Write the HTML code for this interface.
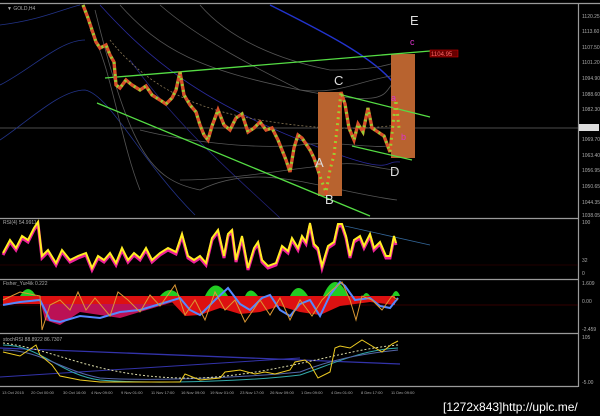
<!DOCTYPE html>
<html><head><style>
html,body{margin:0;padding:0;background:#000;width:600px;height:416px;overflow:hidden}
svg{display:block}
text{font-family:"Liberation Sans",sans-serif}
</style></head><body>
<svg width="600" height="416" viewBox="0 0 600 416">
<rect width="600" height="416" fill="#000"/>
<g stroke="#9a9a9a" stroke-width="1.2" fill="none">
<line x1="0" y1="3.5" x2="600" y2="3.5"/>
<line x1="0" y1="218.5" x2="578" y2="218.5"/>
<line x1="0" y1="279.5" x2="578" y2="279.5"/>
<line x1="0" y1="333.5" x2="578" y2="333.5"/>
<line x1="0" y1="386.5" x2="578" y2="386.5"/>
<line x1="578.5" y1="3" x2="578.5" y2="387"/>
</g>
<line x1="0" y1="128" x2="578" y2="128" stroke="#666" stroke-width="0.8"/>
<g fill="none" stroke-width="0.8">
<path d="M0,25 C40,20 60,10 80,5" stroke="#223388"/>
<path d="M0,85 C30,70 60,40 85,40" stroke="#223388"/>
<path d="M0,140 C30,120 60,90 85,90 C110,95 140,160 195,215" stroke="#223388"/>
<path d="M100,5 C150,60 200,100 300,140 S380,160 400,162" stroke="#2a2a9a"/>
<path d="M130,60 C180,130 240,180 280,218" stroke="#222277"/>
<path d="M270,5 C320,30 380,60 397,88" stroke="#2233cc" stroke-width="1.5"/>
<path d="M90,30 C110,60 120,140 140,190" stroke="#555"/>
<path d="M95,10 C130,150 150,180 200,190 C260,160 320,190 397,200" stroke="#555"/>
<path d="M120,5 C160,50 200,70 300,90 S380,90 397,80" stroke="#555"/>
<path d="M160,5 C200,40 260,70 300,90 C340,95 360,80 397,75" stroke="#555"/>
<path d="M200,5 C230,40 280,60 330,70 C360,70 380,68 397,62" stroke="#555"/>
<path d="M140,130 C180,140 250,150 300,145 C340,140 370,150 397,145" stroke="#555"/>
<path d="M180,180 C230,180 280,170 330,165 C360,160 380,170 397,170" stroke="#555"/>
<path d="M110,40 C150,90 200,110 260,120 S360,130 397,125" stroke="#887755" stroke-dasharray="2,2"/>
</g>
<rect x="318" y="92" width="24" height="104" fill="#b8632f"/>
<rect x="391" y="54" width="24" height="104" fill="#b8632f"/>
<g stroke="#55dd44" stroke-width="1.3">
<line x1="105" y1="78" x2="430" y2="51"/>
<line x1="97" y1="103" x2="370" y2="216"/>
<line x1="342" y1="95" x2="430" y2="117"/>
<line x1="352" y1="146" x2="412" y2="160"/>
</g>
<g id="px">
<polyline fill="none" stroke="#d8502a" stroke-width="3.4" points="83,5 88,18 92,30 96,42 100,48 106,45 110,55 114,62 116,85 120,88 126,80 132,85 140,90 146,86 152,95 160,100 166,104 172,98 176,90 180,72 184,95 190,105 196,112 200,125 204,135 208,140 212,126 218,110 224,125 230,130 236,118 242,114 248,132 254,128 260,122 266,130 272,128 278,140 282,150 286,160 290,172 294,148 298,135 302,138 306,144 310,150 314,158 318,170 322,182 326,192 330,170 334,155 338,120 341,92 345,104 349,128 354,140 358,124 363,132 368,108 372,128 378,132 384,136 390,152 393,124 396,100 399,128"/>
<polyline fill="none" stroke="#99cc33" stroke-width="3" stroke-dasharray="2,4" points="83,5 88,18 92,30 96,42 100,48 106,45 110,55 114,62 116,85 120,88 126,80 132,85 140,90 146,86 152,95 160,100 166,104 172,98 176,90 180,72 184,95 190,105 196,112 200,125 204,135 208,140 212,126 218,110 224,125 230,130 236,118 242,114 248,132 254,128 260,122 266,130 272,128 278,140 282,150 286,160 290,172 294,148 298,135 302,138 306,144 310,150 314,158 318,170 322,182 326,192 330,170 334,155 338,120 341,92 345,104 349,128 354,140 358,124 363,132 368,108 372,128 378,132 384,136 390,152 393,124 396,100 399,128"/>
</g>
<g font-size="13" fill="#ddd">
<text x="410" y="25">E</text>
<text x="334" y="85">C</text>
<text x="315" y="167">A</text>
<text x="325" y="204">B</text>
<text x="390" y="176">D</text>
</g>
<g font-size="9" fill="#dd33cc">
<text x="410" y="45">c</text><text x="391" y="101">a</text><text x="401" y="140">b</text>
</g>
<rect x="430" y="50" width="28" height="7" fill="#600" stroke="#c00" stroke-width="0.6"/>
<text x="431" y="56" font-size="6" fill="#f66">1104.95</text>
<rect x="579" y="124" width="20" height="7" fill="#ddd"/>
<g font-size="5" fill="#aaa">
<text x="7" y="10">▼ GOLD,H4</text>
<text x="582" y="18">1120.25</text><text x="582" y="33">1113.60</text><text x="582" y="49">1107.50</text>
<text x="582" y="64">1101.20</text><text x="582" y="80">1094.90</text><text x="582" y="96">1088.60</text>
<text x="582" y="111">1082.30</text><text x="582" y="141">1069.70</text><text x="582" y="157">1063.40</text>
<text x="582" y="172">1056.95</text><text x="582" y="188">1050.65</text><text x="582" y="204">1044.35</text>
<text x="582" y="217">1038.05</text>
<text x="3" y="224">RSI(4) 54.9911</text><text x="582" y="224">100</text><text x="582" y="262">32</text><text x="582" y="275">0</text>
<text x="3" y="285">Fisher_Yur4ik 0.222</text><text x="582" y="285">1.609</text><text x="582" y="303">0.00</text><text x="582" y="331">-2.459</text>
<text x="3" y="341">stochRSI 88.8922 86.7307</text><text x="582" y="339">105</text><text x="582" y="384">-5.00</text>
</g>
<g font-size="4" fill="#aaa">
<text x="2" y="394">13 Oct 2015</text><text x="31" y="394">20 Oct 00:00</text><text x="63" y="394">30 Oct 16:00</text><text x="91" y="394">4 Nov 09:00</text><text x="121" y="394">9 Nov 01:00</text><text x="151" y="394">11 Nov 17:00</text><text x="181" y="394">16 Nov 09:00</text><text x="210" y="394">19 Nov 01:00</text><text x="240" y="394">23 Nov 17:00</text><text x="270" y="394">26 Nov 09:00</text><text x="301" y="394">1 Dec 09:00</text><text x="331" y="394">4 Dec 01:00</text><text x="361" y="394">8 Dec 17:00</text><text x="391" y="394">11 Dec 09:00</text>
</g>
<line x1="0" y1="265" x2="578" y2="265" stroke="#400" stroke-width="0.6"/>
<line x1="345" y1="226" x2="430" y2="245" stroke="#336699" stroke-width="0.8"/>
<polyline fill="none" stroke="#ee2299" stroke-width="3" points="3,255 10,242 16,250 22,238 28,242 34,230 38,224 42,258 48,252 56,265 62,252 70,262 78,258 86,255 92,270 98,258 104,262 110,255 116,265 122,250 128,262 134,255 140,260 146,250 152,262 160,255 168,250 176,254 182,236 188,258 194,262 200,258 206,265 212,240 218,232 224,258 228,236 232,232 236,262 242,238 248,270 254,250 258,244 262,262 268,268 276,265 282,248 288,253 292,240 298,250 302,238 306,244 310,225 314,246 318,250 322,268 328,248 334,244 338,226 342,226 346,238 350,258 354,242 360,238 364,248 370,236 374,250 380,244 386,258 390,258 394,238 396,245"/>
<polyline fill="none" stroke="#ffee22" stroke-width="2" points="3,253 10,240 16,248 22,236 28,240 34,228 38,222 42,256 48,250 56,263 62,250 70,260 78,256 86,253 92,268 98,256 104,260 110,253 116,263 122,248 128,260 134,253 140,258 146,248 152,260 160,253 168,248 176,252 182,234 188,256 194,260 200,256 206,263 212,238 218,230 224,256 228,234 232,230 236,260 242,236 248,268 254,248 258,242 262,260 268,266 276,263 282,246 288,251 292,238 298,248 302,236 306,242 310,223 314,244 318,248 322,266 328,246 334,242 338,224 342,224 346,236 350,256 354,240 360,236 364,246 370,234 374,248 380,242 386,256 390,256 394,236 396,243"/>
<line x1="0" y1="305" x2="578" y2="305" stroke="#600" stroke-width="0.6"/>
<path d="M3,300 L40,300 L45,320 L60,325 L80,312 L120,318 L160,306 L180,300 L180,296 L3,296Z" fill="#bb1155"/>
<path d="M3,296 L395,296 L395,305 L370,302 L340,306 L320,315 L300,312 L280,306 L260,312 L240,314 L220,308 L200,315 L185,316 L170,300 L160,304 L3,304Z" fill="#dd1111"/>
<g fill="#22cc22"><path d="M20,296 Q28,282 36,296Z"/><path d="M160,296 Q170,284 180,296Z"/><path d="M205,296 Q215,275 228,296Z"/><path d="M245,296 Q250,285 258,296Z"/><path d="M290,296 Q298,280 308,296Z"/><path d="M323,296 Q335,268 348,296Z"/><path d="M363,296 Q366,290 370,296Z"/><path d="M392,296 Q396,286 400,296Z"/></g>
<polyline fill="none" stroke="#5588ff" stroke-width="2" points="3,305 20,302 40,300 50,320 60,322 80,316 100,318 120,312 140,310 160,304 180,298 190,310 200,315 215,300 228,288 240,304 250,310 262,298 270,295 280,310 290,316 300,304 310,300 320,316 330,295 340,282 345,286 355,300 370,298 380,306 390,308 398,298"/>
<polyline fill="none" stroke="#dd9933" stroke-width="1" points="3,300 20,292 40,296 42,330 50,305 60,300 70,310 78,292 86,310 95,298 110,316 118,292 128,300 140,312 150,295 160,306 175,285 185,315 195,300 205,320 215,292 225,310 235,300 245,322 260,300 270,315 280,298 290,320 300,300 312,316 322,300 332,290 342,282 350,300 356,320 362,296 372,300 382,310 392,296 398,300"/>
<g fill="none" stroke-width="1">
<line x1="0" y1="377" x2="300" y2="358" stroke="#3333aa"/>
<line x1="0" y1="348" x2="400" y2="364" stroke="#3333aa" stroke-width="1.3"/>
<path d="M3,345 C40,345 60,375 100,380 C160,385 260,380 300,375 C330,365 360,350 398,348" stroke="#33aaaa"/>
<path d="M3,350 C40,350 60,370 100,378 C160,382 260,376 300,372 C330,360 360,354 398,350" stroke="#5566aa"/>
<path d="M3,343 C60,350 100,380 200,378 C280,374 340,350 398,345" stroke="#ddddaa" stroke-dasharray="2,2"/>
<polyline stroke="#eecc22" points="3,352 20,356 36,345 40,355 52,365 60,376 80,380 100,382 140,382 180,382 185,374 200,380 220,378 225,372 240,370 255,374 265,372 275,374 290,370 295,362 305,360 310,364 318,378 330,372 335,348 340,346 350,348 362,340 372,346 382,352 392,344 398,341"/>
</g>
<text x="443" y="411" font-size="12" fill="#fff" font-family="Liberation Mono,monospace">[1272x843]http://uplc.me/</text>
</svg>
</body></html>
